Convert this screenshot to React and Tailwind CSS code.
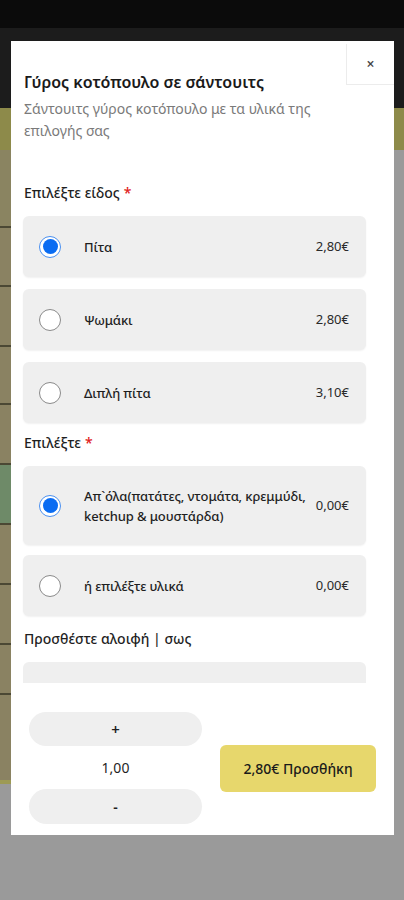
const font = { fontFamily: '"Noto Sans", "Open Sans", sans-serif' };

function Radio({ checked }) {
  if (checked) {
    return (
      <span className="flex h-[22px] w-[22px] shrink-0 items-center justify-center rounded-full border-[1.5px] border-[#4a90f0] bg-white">
        <span className="h-[15px] w-[15px] rounded-full bg-[#0a6cf2]" />
      </span>
    );
  }
  return <span className="h-[22px] w-[22px] shrink-0 rounded-full border border-[#8a8a8a] bg-white" />;
}

function Option({ label, price, checked, tall }) {
  return (
    <div
      className={
        "flex items-center rounded-md bg-[#efefef] pl-[16px] pr-[17px] shadow-[0_1px_2px_rgba(0,0,0,0.06)] " +
        (tall ? "h-[79px]" : "h-[61px]")
      }
    >
      <Radio checked={checked} />
      <div className="ml-[23px] flex-1 pr-[2px] text-[13px] font-medium leading-[20px] tracking-[-0.1px] text-[#1f1f1f]">
        {label}
      </div>
      <div className="text-[13px] text-[#2a2a2a]">{price}</div>
    </div>
  );
}

function Label({ children, required }) {
  return (
    <div className="text-[14px] font-medium leading-[20px] text-[#1f1f1f]">
      {children}
      {required && <span className="ml-1 text-[#e02020]">*</span>}
    </div>
  );
}

function Background() {
  const rows = [
    "h-[76px] bg-[#8a8461]",
    "h-[57px] bg-[#8a8262]",
    "h-[58px] bg-[#8a8262]",
    "h-[56px] bg-[#8a8262]",
    "h-[58px] bg-[#8a8262]",
    "h-[58px] bg-[#6e8a68]",
    "h-[58px] bg-[#8a8262]",
    "h-[58px] bg-[#8a8262]",
    "h-[48px] bg-[#8a8262]",
  ];
  return (
    <div className="flex h-[900px] w-full flex-col">
      <div className="h-[28px] bg-[#0b0b0b]" />
      <div className="h-[80px] bg-[#1c1c1c]" />
      <div className="h-[42px] bg-[#8d8a4a]" />
      <div className="flex flex-1 bg-[#9a9a9a]">
        <div className="flex w-[200px] flex-col">
          {rows.map((r, i) => (
            <div key={i}>
              <div className={r} />
              <div className="h-[2px] bg-[#4b4834]" />
            </div>
          ))}
          <div className="h-[85px] bg-[#8a8262]" />
          <div className="h-[4px] bg-[#9d9a55]" />
        </div>
      </div>
    </div>
  );
}

export default function App() {
  return (
    <div className="relative h-[900px] w-[404px] overflow-hidden" style={font}>
      <Background />

      <div className="absolute left-[11px] top-[41px] flex h-[794px] w-[383px] flex-col bg-white">
        <button className="absolute right-0 top-[3px] flex h-[41px] w-[48px] items-center justify-center border-b border-l border-[#ececec] text-[14px] font-semibold leading-none text-[#444]">
          ×
        </button>

        <div className="pl-[13px] pr-[20px] pt-[30px]">
          <h2 className="text-[16px] font-semibold leading-[22px] text-[#1a1a1a]">Γύρος κοτόπουλο σε σάντουιτς</h2>
          <p className="mt-[5px] pr-[40px] text-[14px] leading-[22px] text-[#7a7a7a]">
            Σάντουιτς γύρος κοτόπουλο με τα υλικά της επιλογής σας
          </p>
        </div>

        <div className="mt-[41px] flex-1 overflow-hidden pl-[12px] pr-[28px]">
          <div className="pl-px">
            <Label required>Επιλέξτε είδος</Label>
          </div>
          <div className="mt-[13px] flex flex-col gap-[12px]">
            <Option label="Πίτα" price="2,80€" checked />
            <Option label="Ψωμάκι" price="2,80€" />
            <Option label="Διπλή πίτα" price="3,10€" />
          </div>

          <div className="mt-[10px] pl-px">
            <Label required>Επιλέξτε</Label>
          </div>
          <div className="mt-[13px] flex flex-col gap-[10px]">
            <Option label="Απ`όλα(πατάτες, ντομάτα, κρεμμύδι, ketchup & μουστάρδα)" price="0,00€" checked tall />
            <Option label="ή επιλέξτε υλικά" price="0,00€" />
          </div>

          <div className="mt-[13px] pl-px">
            <Label>Προσθέστε αλοιφή | σως</Label>
          </div>
          <div className="mt-[13px] flex h-[61px] items-center rounded-md bg-[#efefef] pl-[17px] pr-[17px]">
            <span className="h-[20px] w-[20px] rounded-sm border-2 border-[#9a9a9a] bg-white" />
          </div>
        </div>

        <div className="flex h-[152px] items-center gap-[18px] pb-[11px] pl-[18px] pt-[29px]">
          <div className="flex w-[173px] flex-col">
            <button className="h-[34px] rounded-full bg-[#efefef] text-[15px] font-semibold text-[#1f1f1f]">+</button>
            <div className="flex h-[43px] items-center justify-center text-[14px] text-[#1f1f1f]">1,00</div>
            <button className="h-[35px] rounded-full bg-[#efefef] text-[14px] font-semibold text-[#1f1f1f]">-</button>
          </div>
          <button className="h-[47px] w-[156px] rounded-md bg-[#e7d76c] text-[14px] font-medium text-[#1a1a1a]">
            2,80€ Προσθήκη
          </button>
        </div>
      </div>
    </div>
  );
}
